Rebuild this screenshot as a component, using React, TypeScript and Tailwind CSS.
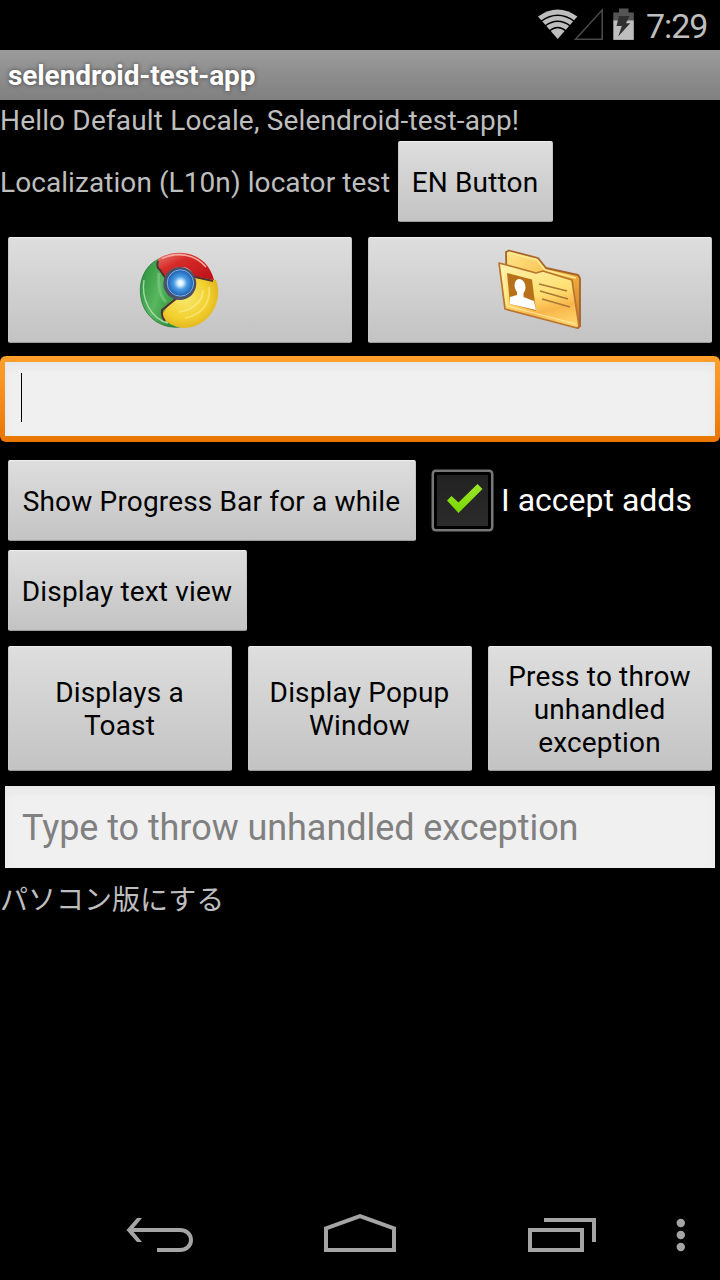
import type { ReactNode } from "react";

function Button({ className, children }: { className: string; children: ReactNode }) {
  return (
    <button
      className={`flex shrink-0 items-center justify-center rounded-[2px] border border-t-[#ededed] border-r-[#c4c4c4] border-b-[#9a9a9a] border-l-[#c9c9c9] bg-linear-to-b from-[#dedede] to-[#c3c3c3] pr-px text-center text-[28px] leading-[33px] tracking-[0.16px] whitespace-nowrap text-black ${className}`}
    >
      {children}
    </button>
  );
}

function StatusBar() {
  return (
    <div className="flex h-[50px] shrink-0 items-start bg-black">
      <svg className="ml-[536px] h-[50px] w-[110px] shrink-0" viewBox="536 0 110 50">
        <path d="M538 16.500Q557.700 2.500 577.400 16.500L557.700 39Z" fill="#bebebe" />
        <g fill="none" stroke="#000" strokeWidth="1.500">
          <path d="M541 21.300Q557.700 9 574.400 21.300" />
          <path d="M545 26Q557.700 16.500 570.400 26" />
          <path d="M549 31.300Q557.700 23.800 566.400 31.300" />
        </g>
        <path d="M575.500 39.200L602.200 10V39.200Z" fill="none" stroke="#484848" strokeWidth="1.600" />
        <path d="M619 8.500h9.500v4h5.300v8h-20.500v-8h5.700Z" fill="#555" />
        <path d="M613.300 20.300h20.500v19.600h-20.500Z" fill="#bebebe" />
        <path d="M619 16h10.500l-3.500 7.300h4.200l-12 13.200l3.600-10.600h-5.300Z" fill="#303030" />
      </svg>
      <span className="mt-[7px] text-[34px] leading-[38px] tracking-[-1.100px] text-[#bebebe]">7:29</span>
    </div>
  );
}

function ChromeIcon() {
  return (
    <svg className="h-[82px] w-[82px]" viewBox="139 248 82 82">
      <defs>
        <linearGradient id="cr" x1="0" y1="0" x2="1" y2="1">
          <stop offset="0" stopColor="#e98078" />
          <stop offset=".35" stopColor="#d62c28" />
          <stop offset="1" stopColor="#bd0e16" />
        </linearGradient>
        <radialGradient id="cy" cx=".4" cy=".4" r=".7">
          <stop offset="0" stopColor="#f8ea70" />
          <stop offset=".6" stopColor="#f2d02e" />
          <stop offset="1" stopColor="#dbac1b" />
        </radialGradient>
        <linearGradient id="cg" x1="0" y1="0" x2="1" y2=".6">
          <stop offset="0" stopColor="#268a36" />
          <stop offset=".55" stopColor="#58b75f" />
          <stop offset="1" stopColor="#2a9038" />
        </linearGradient>
        <radialGradient id="cb">
          <stop offset="0" stopColor="#fff" />
          <stop offset=".2" stopColor="#d9f0ff" />
          <stop offset=".5" stopColor="#4a9be4" />
          <stop offset="1" stopColor="#1c5eae" />
        </radialGradient>
      </defs>
      <path d="M159 258C145 264 138 280 141 297C144 315 160 328 180 326L163 316C163 308 171 302 177 297L166 270Z" fill="url(#cg)" stroke="#23773a" strokeWidth=".8" />
      <path d="M144 279C141 298 151 318 168 322" fill="none" stroke="#a5d8a7" strokeWidth="1.400" />
      <path d="M159 272Q157 292 166 301" fill="none" stroke="#8bd18b" strokeWidth="3" opacity=".5" />
      <path d="M194 275L216 279C224 299 210 327 183 327C174 326 166 322 162 315C164 307 174 301 178 296C190 297 197 289 194 275Z" fill="url(#cy)" />
      <path d="M209 286C211 301 202 314 185 317M203 289C203 300 193 309 179 311" fill="none" stroke="#fff29d" strokeWidth="2" opacity=".5" />
      <path d="M158 258C175 246 207 250 214 279L193 275C191 263 173 263 165 275L159 269Z" fill="url(#cr)" />
      <path d="M162 257.500C177 250.500 195 253 206 266" fill="none" stroke="#f5aaa2" strokeWidth="1.600" />
      <path d="M158 260Q156 266 160 269L166 278M193 275.500L213 280M177 297L162 309Q161 315 165 320" fill="none" stroke="#542e31" strokeWidth="2" />
      <circle cx="179.800" cy="282.500" r="16.500" fill="#4b5268" />
      <circle cx="180.400" cy="282" r="13.200" fill="url(#cb)" stroke="#79b2e4" strokeWidth="1" />
    </svg>
  );
}

function ContactsIcon() {
  return (
    <svg className="h-[82px] w-[86px]" viewBox="497 248 86 82">
      <defs>
        <linearGradient id="fb" x1="0" y1="0" x2="1" y2="1">
          <stop offset="0" stopColor="#ffe58a" />
          <stop offset=".55" stopColor="#f5b942" />
          <stop offset="1" stopColor="#c77825" />
        </linearGradient>
        <linearGradient id="ff" x1=".3" y1="0" x2=".6" y2="1">
          <stop offset="0" stopColor="#fff0a5" />
          <stop offset=".5" stopColor="#ffdf72" />
          <stop offset=".75" stopColor="#f8b64b" />
          <stop offset="1" stopColor="#ffd168" />
        </linearGradient>
      </defs>
      <path d="M506 251L509 249.500L538 257L546 267L578 274L580 277V325L578 327L507 305Z" fill="url(#fb)" stroke="#a6622b" strokeWidth="1.800" strokeLinejoin="round" />
      <path d="M509 252L537 259L545 269L576 277" fill="none" stroke="#ffe990" strokeWidth="1.800" />
      <path d="M499 262L536 272L543 270L572 279L579 325L577 327L505 308Z" fill="url(#ff)" stroke="#b97530" strokeWidth="1.700" strokeLinejoin="round" />
      <path d="M507 272L532 278.500L536 310L510 303Z" fill="#b87118" />
      <path d="M519.700 278C526 279 527 289 523.500 292V296L534 300L536 309L510 303L510 296L517 294V291C513 286 514 278 519.700 278Z" fill="#fff" />
      <path d="M539 283L567 290M540 290L568 298M542 298L570 306" stroke="#a97835" strokeWidth="1.500" />
      <path d="M502 265L507 305L576 323" fill="none" stroke="#fff4b2" strokeWidth="1" opacity=".8" />
    </svg>
  );
}

function Checkbox() {
  return (
    <div className="ml-4 flex h-[61px] w-[61px] shrink-0 items-center justify-center rounded-[4px] border-[2.5px] border-[#777] bg-black p-[3px] shadow-[0_0_0_0.5px_#777]">
      <div className="flex h-full w-full items-center justify-center bg-linear-to-b from-[#222] to-[#2b2b2b]">
        <svg className="h-[51px] w-[51px]" viewBox="437 475 51 51">
          <defs>
            <linearGradient id="ck" x1="0" y1="0" x2="0" y2="1">
              <stop offset="0" stopColor="#9be52b" />
              <stop offset="1" stopColor="#78d900" />
            </linearGradient>
          </defs>
          <path d="M447 500.500L451.500 496L458.500 502.500L477.500 484L482.500 489L458.500 513Z" fill="url(#ck)" />
        </svg>
      </div>
    </div>
  );
}

function NavBar() {
  return (
    <nav className="mt-auto h-[96px] shrink-0 bg-black">
      <svg className="h-[96px] w-[720px]" viewBox="0 1184 720 96">
        <g fill="none" stroke="#a4a4a4" strokeWidth="4">
          <path d="M131 1230H180C186 1230 191 1234 191 1240C191 1246 186 1250 180 1250H157" />
          <path d="M326 1250V1228.300L360 1216.200L394 1228.300V1250Z" />
          <path d="M530 1230H582V1250H530Z" />
          <path d="M544 1220H594V1242" />
        </g>
        <path d="M137 1218H142L132 1230L142 1242H137L126.500 1230Z" fill="#a4a4a4" />
        <circle cx="680.800" cy="1223" r="4.200" fill="#a4a4a4" />
        <circle cx="680.800" cy="1235" r="4.200" fill="#a4a4a4" />
        <circle cx="680.800" cy="1247" r="4.200" fill="#a4a4a4" />
      </svg>
    </nav>
  );
}

export default function App() {
  return (
    <div className="flex h-[1280px] w-[720px] flex-col overflow-hidden bg-black font-['Roboto','Noto_Sans_CJK_JP',sans-serif] text-[28px] leading-[33px] text-[#bebebe]">
      <StatusBar />
      <header className="flex h-[50px] shrink-0 items-center bg-linear-to-b from-[#9b9b9b] to-[#808080] pl-2 text-[28px] font-bold whitespace-nowrap text-white [text-shadow:0_0_4px_#444]">
        <h1 className="tracking-[-0.100px]">selendroid-test-app</h1>
      </header>
      <p className="mt-1 h-[37px] shrink-0 tracking-[0.170px] whitespace-nowrap">Hello Default Locale, Selendroid-test-app!</p>
      <div className="flex h-[81px] shrink-0 items-center">
        <span className="w-[398px] shrink-0 pt-0.5 tracking-[0.070px] whitespace-nowrap">Localization (L10n) locator test</span>
        <Button className="h-[81px] w-[155px] pt-0.5">EN Button</Button>
      </div>
      <div className="mt-[15px] flex shrink-0 gap-4 px-2">
        <Button className="h-[106px] w-[344px]"><ChromeIcon /></Button>
        <Button className="h-[106px] w-[344px]"><ContactsIcon /></Button>
      </div>
      <div className="mt-[13px] flex h-[86px] shrink-0 rounded-[6px] bg-linear-to-b from-[#ffa02c] to-[#e97600] px-[5px] pt-1.5 pb-[6px]">
        <div className="w-full bg-[#f0f0f0] pt-[11px] pl-4 shadow-[inset_0_5px_8px_#e6e6e6]">
          <div className="h-[49px] w-px bg-black" />
        </div>
      </div>
      <div className="mt-[18px] flex h-[81px] shrink-0 items-center pl-2">
        <Button className="h-[81px] w-[408px] pt-0.5">Show Progress Bar for a while</Button>
        <Checkbox />
        <span className="ml-2 text-[32px] whitespace-nowrap text-white">I accept adds</span>
      </div>
      <div className="mt-[9px] flex shrink-0 pl-2">
        <Button className="h-[81px] w-[239px] pt-0.5">Display text view</Button>
      </div>
      <div className="mt-[15px] flex shrink-0 gap-4 px-2">
        <Button className="h-[125px] w-[224px]">Displays a<br />Toast</Button>
        <Button className="h-[125px] w-[224px]">Display Popup<br />Window</Button>
        <Button className="h-[125px] w-[224px] pt-0.5">Press to throw<br />unhandled<br />exception</Button>
      </div>
      <div className="mx-[5px] mt-[15px] flex h-[82px] shrink-0 items-center bg-[#f0f0f0] pt-0.5 pl-[17px] text-[36px] tracking-[-0.060px] whitespace-nowrap text-[#808080] shadow-[inset_0_5px_8px_#e6e6e6]">
        <span>Type to throw unhandled exception</span>
      </div>
      <p className="mt-4 shrink-0 whitespace-nowrap">パソコン版にする</p>
      <NavBar />
    </div>
  );
}
